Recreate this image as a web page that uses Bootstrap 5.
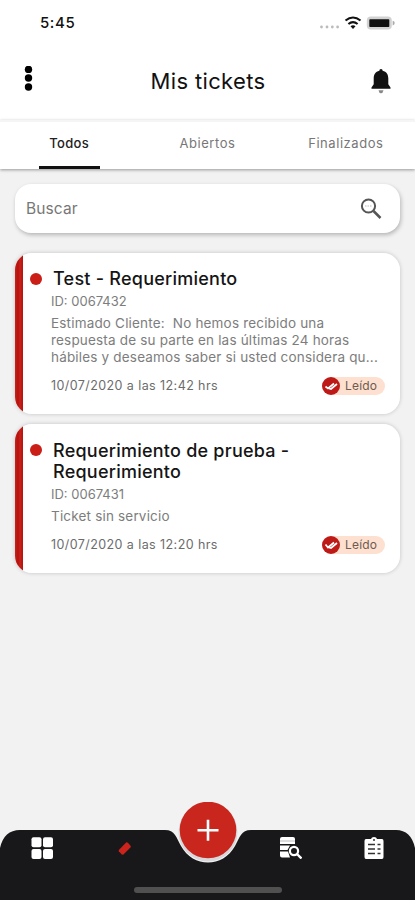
<!DOCTYPE html>
<html lang="es">
<head>
<meta charset="utf-8">
<meta name="viewport" content="width=device-width, initial-scale=1">
<title>Mis tickets</title>
<link href="https://cdn.jsdelivr.net/npm/bootstrap@5.3.0/dist/css/bootstrap.min.css" rel="stylesheet">
<style>
body{font-family:Inter,"Liberation Sans",sans-serif;background:#f2f2f2;color:#111;height:900px;overflow:hidden}
.screen{height:900px}
svg{display:block;flex:none}
.statusbar{height:46px;padding:0 16px 0 40px}
.clock{font-size:15px;font-weight:500;letter-spacing:.6px;line-height:46px}
.titlebar{height:74px;padding:20px 22px 0 22px}
.titlebar h1{font-size:22px;font-weight:400;letter-spacing:.35px;line-height:30px;padding-left:11px}
.tabs{height:49px;border-top:2px solid #f5f5f5;box-shadow:0 1px 3px rgba(0,0,0,.38);position:relative}
.tabs a{flex:1 0 0;height:47px;color:#777;font-size:13px;letter-spacing:.55px;line-height:43px;text-align:center;text-decoration:none}
.tabs a.current{color:#222;font-weight:500;letter-spacing:.3px}
.tabs a.current::after{content:"";display:block;width:61px;height:3px;margin:1px auto 0;background:#111}
.searchbox{height:49px;margin:15px 15px 0;padding:0 18px 0 11px;border-radius:16px;box-shadow:1px 2px 4px rgba(0,0,0,.25)}
.searchbox input{font-size:15.5px;letter-spacing:.1px;color:#777}
.searchbox input::placeholder{color:#777;opacity:1}
.ticket{margin:0 15px;border-radius:17px;box-shadow:0 0 4px rgba(0,0,0,.2);background:linear-gradient(90deg,#c9201a 0,#b5120e 3px,#c9201a 5px,#b5120e 8px,#fff 8px);padding:15px 15px 0 15px;color:#7d7d7d;font-size:13px}
.t1{height:161px;margin-top:20px}
.t2{height:149px;margin-top:10px;padding-top:16px}
.dot{width:12px;height:12px;border-radius:50%;background:#cb1e17;margin-top:5px;flex:none}
.t2 .dot{margin-top:4px}
.ticket h2{font-size:18px;font-weight:500;letter-spacing:.24px;line-height:21px;color:#151515;margin:0 0 0 11px}
.details{padding-left:21px}
.ident{font-size:13px;line-height:18px;margin-top:3px}
.summary{font-size:13.5px;line-height:17px;letter-spacing:.18px;margin-top:5px}
.foot{height:18px;margin-top:11px}
.date{font-size:12.5px;letter-spacing:.42px;color:#6c6c6c;white-space:nowrap}
.status{width:63px;height:18px;border-radius:9px;background:#fde0cf;color:#6d5b51;font-size:12px;letter-spacing:.2px}
.status svg{margin-right:5px}
.navarea{height:98px;margin-top:auto;position:relative}
.navarea .shape{position:absolute;left:0;top:0}
.navicons{position:relative;padding:35px 30px 0 31px}
.gap-a{margin-right:61px}
.gap-b{margin-right:144px}
.gap-c{margin-right:61px}
</style>
</head>
<body>
<main class="screen d-flex flex-column">
  <header class="bg-white">
    <div class="statusbar d-flex justify-content-between">
      <span class="clock">5:45</span>
      <svg width="80" height="46" viewBox="319 0 80 46">
        <g fill="#bbb"><circle cx="321.5" cy="27" r="1.4"/><circle cx="327" cy="27" r="1.4"/><circle cx="332.3" cy="27" r="1.4"/><circle cx="337.6" cy="27" r="1.4"/></g>
        <g fill="none" stroke="#111" stroke-width="2.1"><path d="M345.5 20.5q7.5-6 15 0"/><path d="M348.4 24q4.6-3.7 9.2 0"/></g><path d="M350.5 26.3q2.5-2 5 0L353 29z" fill="#111"/>
        <rect x="366.8" y="16.6" width="25" height="13" rx="4" fill="#d2d2d2"/><path d="M392.7 20.8q2 .4 2 2.300t-2 2.300z" fill="#aaa"/><rect x="369.300" y="19.300" width="20" height="7.700" rx=".8" fill="#111"/>
      </svg>
    </div>
    <div class="titlebar d-flex justify-content-between align-items-start">
      <svg width="14" height="28" viewBox="0 0 14 28"><circle cx="6.500" cy="3.400" r="3.700"/><circle cx="6.500" cy="12" r="3.700"/><circle cx="6.500" cy="21" r="3.700"/></svg>
      <h1 class="m-0">Mis tickets</h1>
      <svg width="24" height="28" viewBox="369 66 24 28"><path d="M381 69c1 0 1.600.7 1.600 1.800 4 1 5.700 3.800 5.700 7.700v5.700l2.200 3.300v1.200h-19v-1.200l2.200-3.300v-5.700c0-3.900 1.700-6.700 5.700-7.700C379.400 69.700 380 69 381 69z" fill="#111"/><path d="M378.500 90.200h5q-.6 3-2.500 3t-2.500-3z" fill="#888"/></svg>
    </div>
    <nav class="tabs d-flex"><a class="current" href="#">Todos</a><a href="#">Abiertos</a><a href="#">Finalizados</a></nav>
  </header>
  <div class="searchbox bg-white d-flex align-items-center">
    <input class="form-control border-0 p-0 shadow-none bg-transparent" type="text" placeholder="Buscar">
    <svg width="22" height="22" viewBox="0 0 22 22" fill="none" stroke="#555"><circle cx="8.500" cy="8" r="6.600" stroke-width="2"/><path d="M13.500 13l7 7" stroke-width="2.500"/><path d="M5 8h7" stroke="#bbb" stroke-dasharray="1.500 1"/></svg>
  </div>
  <article class="ticket t1">
    <div class="d-flex"><span class="dot"></span><h2>Test - Requerimiento</h2></div>
    <div class="details">
      <div class="ident">ID: 0067432</div>
      <div class="summary text-nowrap">Estimado Cliente:&nbsp; No hemos recibido una<br>respuesta de su parte en las últimas 24 horas<br>hábiles y deseamos saber si usted considera qu...</div>
      <div class="foot d-flex align-items-center justify-content-between"><span class="date">10/07/2020 a las 12:42 hrs</span>
        <span class="status d-flex align-items-center"><svg width="18" height="18" viewBox="0 0 18 18"><circle cx="9" cy="9" r="9" fill="#bd1a17"/><path d="M3.500 9.500l2.500 2 6-5M7 11.500l2 .5 6-5" fill="none" stroke="#fff" stroke-width="1.700"/></svg>Leído</span></div>
    </div>
  </article>
  <article class="ticket t2">
    <div class="d-flex"><span class="dot"></span><h2>Requerimiento de prueba -<br>Requerimiento</h2></div>
    <div class="details">
      <div class="ident">ID: 0067431</div>
      <div class="summary">Ticket sin servicio</div>
      <div class="foot d-flex align-items-center justify-content-between"><span class="date">10/07/2020 a las 12:20 hrs</span>
        <span class="status d-flex align-items-center"><svg width="18" height="18" viewBox="0 0 18 18"><circle cx="9" cy="9" r="9" fill="#bd1a17"/><path d="M3.500 8.500l2.500 3 6-5M7 11.500l2 .5 6-5" fill="none" stroke="#fff" stroke-width="1.700"/></svg>Leído</span></div>
    </div>
  </article>
  <footer class="navarea">
    <svg class="shape" width="415" height="98" viewBox="0 802 415 98">
      <path d="M0 848Q4 830 20 830H165C175 830 176 837 181 846C193 868 223 868 235 846C240 837 241 830 251 830H396Q411 830 415 848V900H0z" fill="#18181a"/>
      <circle cx="208" cy="832" r="29.500" fill="#d8d8da"/><circle cx="208" cy="830" r="28.300" fill="#c9261e"/>
      <path d="M197.500 830.300h21M208 819.800v21" stroke="#fff" stroke-width="2.600"/>
      <rect x="134" y="887" width="148" height="6" rx="3" fill="#505050"/>
    </svg>
    <nav class="navicons d-flex">
      <svg class="gap-a" width="22" height="22" viewBox="0 0 22 22" fill="#fff"><rect x=".5" y=".3" width="10" height="10" rx="2"/><rect x="12" y=".3" width="10" height="10" rx="2"/><rect x=".5" y="11.900" width="10" height="10" rx="2"/><rect x="12" y="11.900" width="10" height="10" rx="2"/></svg>
      <svg class="gap-b" width="22" height="22" viewBox="114 837 22 22"><path d="M118.800 850l7.600-7.700 1.500.4 3 3.600-.5 1.300-7.200 7.200-1.400-.3-3-3.200z" fill="#cb241c"/></svg>
      <svg class="gap-c" width="22" height="22" viewBox="280 837 22 22"><path d="M280 839q0-2 2-2h11q2 0 2 2v5h-15zM280 845.400h10l-2.500 4.600H280zM280 851.400h8l2 6h-8q-2 0-2-2z" fill="#fff"/><path d="M280 841h15" stroke="#bbb"/><circle cx="294" cy="851" r="4.100" fill="#18181a" stroke="#fff" stroke-width="2.200"/><path d="M297 854l4.500 4.500" stroke="#fff" stroke-width="2.400"/></svg>
      <svg width="22" height="22" viewBox="363 837 22 22"><path d="M366 839h5q.5-2 3-2t3 2h5q1.500 0 1.500 2v16q0 2-1.500 2h-16q-1.500 0-1.500-2v-16q0-2 1.500-2z" fill="#fff"/><path d="M368 844.500h7M368 849h7M368 853.500h7M377.500 844.500h3M377.500 849h3M377.500 853.500h3" stroke="#333" stroke-width="1.500"/><circle cx="374" cy="840" r="1" fill="#333"/></svg>
    </nav>
  </footer>
</main>
<script src="https://cdn.jsdelivr.net/npm/bootstrap@5.3.0/dist/js/bootstrap.bundle.min.js"></script>
</body>
</html>
